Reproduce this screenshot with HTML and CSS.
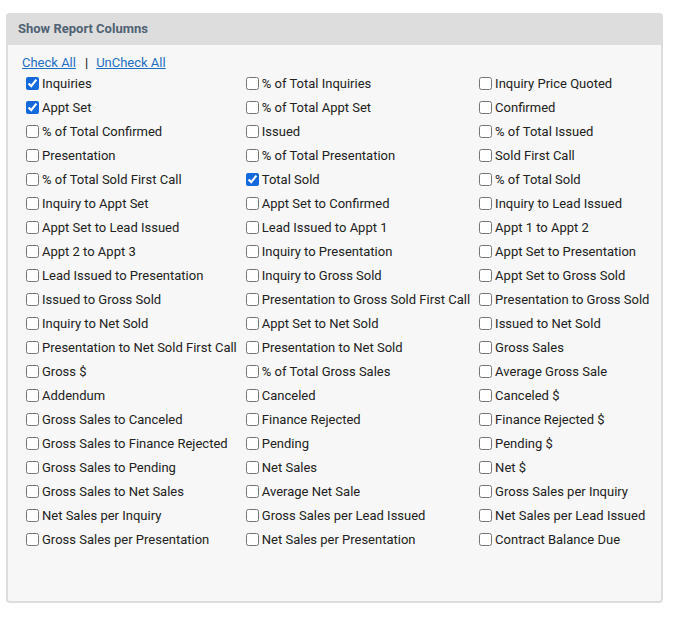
FILE: index.html
```html
<!DOCTYPE html>
<html>
<head>
<meta charset="utf-8">
<link rel="stylesheet" href="styles.css">
</head>
<body>
<div class="panel">
  <div class="panel-header">Show Report Columns</div>
  <div class="panel-body">
    <div class="links"><a href="#">Check All</a><span class="sep">|</span><a href="#">UnCheck All</a></div>
    <div class="grid">
      <label class="item"><input type="checkbox" checked><span>Inquiries</span></label>
      <label class="item"><input type="checkbox"><span>% of Total Inquiries</span></label>
      <label class="item"><input type="checkbox"><span>Inquiry Price Quoted</span></label>
      <label class="item"><input type="checkbox" checked><span>Appt Set</span></label>
      <label class="item"><input type="checkbox"><span>% of Total Appt Set</span></label>
      <label class="item"><input type="checkbox"><span>Confirmed</span></label>
      <label class="item"><input type="checkbox"><span>% of Total Confirmed</span></label>
      <label class="item"><input type="checkbox"><span>Issued</span></label>
      <label class="item"><input type="checkbox"><span>% of Total Issued</span></label>
      <label class="item"><input type="checkbox"><span>Presentation</span></label>
      <label class="item"><input type="checkbox"><span>% of Total Presentation</span></label>
      <label class="item"><input type="checkbox"><span>Sold First Call</span></label>
      <label class="item"><input type="checkbox"><span>% of Total Sold First Call</span></label>
      <label class="item"><input type="checkbox" checked><span>Total Sold</span></label>
      <label class="item"><input type="checkbox"><span>% of Total Sold</span></label>
      <label class="item"><input type="checkbox"><span>Inquiry to Appt Set</span></label>
      <label class="item"><input type="checkbox"><span>Appt Set to Confirmed</span></label>
      <label class="item"><input type="checkbox"><span>Inquiry to Lead Issued</span></label>
      <label class="item"><input type="checkbox"><span>Appt Set to Lead Issued</span></label>
      <label class="item"><input type="checkbox"><span>Lead Issued to Appt 1</span></label>
      <label class="item"><input type="checkbox"><span>Appt 1 to Appt 2</span></label>
      <label class="item"><input type="checkbox"><span>Appt 2 to Appt 3</span></label>
      <label class="item"><input type="checkbox"><span>Inquiry to Presentation</span></label>
      <label class="item"><input type="checkbox"><span>Appt Set to Presentation</span></label>
      <label class="item"><input type="checkbox"><span>Lead Issued to Presentation</span></label>
      <label class="item"><input type="checkbox"><span>Inquiry to Gross Sold</span></label>
      <label class="item"><input type="checkbox"><span>Appt Set to Gross Sold</span></label>
      <label class="item"><input type="checkbox"><span>Issued to Gross Sold</span></label>
      <label class="item"><input type="checkbox"><span>Presentation to Gross Sold First Call</span></label>
      <label class="item"><input type="checkbox"><span>Presentation to Gross Sold</span></label>
      <label class="item"><input type="checkbox"><span>Inquiry to Net Sold</span></label>
      <label class="item"><input type="checkbox"><span>Appt Set to Net Sold</span></label>
      <label class="item"><input type="checkbox"><span>Issued to Net Sold</span></label>
      <label class="item"><input type="checkbox"><span>Presentation to Net Sold First Call</span></label>
      <label class="item"><input type="checkbox"><span>Presentation to Net Sold</span></label>
      <label class="item"><input type="checkbox"><span>Gross Sales</span></label>
      <label class="item"><input type="checkbox"><span>Gross $</span></label>
      <label class="item"><input type="checkbox"><span>% of Total Gross Sales</span></label>
      <label class="item"><input type="checkbox"><span>Average Gross Sale</span></label>
      <label class="item"><input type="checkbox"><span>Addendum</span></label>
      <label class="item"><input type="checkbox"><span>Canceled</span></label>
      <label class="item"><input type="checkbox"><span>Canceled $</span></label>
      <label class="item"><input type="checkbox"><span>Gross Sales to Canceled</span></label>
      <label class="item"><input type="checkbox"><span>Finance Rejected</span></label>
      <label class="item"><input type="checkbox"><span>Finance Rejected $</span></label>
      <label class="item"><input type="checkbox"><span>Gross Sales to Finance Rejected</span></label>
      <label class="item"><input type="checkbox"><span>Pending</span></label>
      <label class="item"><input type="checkbox"><span>Pending $</span></label>
      <label class="item"><input type="checkbox"><span>Gross Sales to Pending</span></label>
      <label class="item"><input type="checkbox"><span>Net Sales</span></label>
      <label class="item"><input type="checkbox"><span>Net $</span></label>
      <label class="item"><input type="checkbox"><span>Gross Sales to Net Sales</span></label>
      <label class="item"><input type="checkbox"><span>Average Net Sale</span></label>
      <label class="item"><input type="checkbox"><span>Gross Sales per Inquiry</span></label>
      <label class="item"><input type="checkbox"><span>Net Sales per Inquiry</span></label>
      <label class="item"><input type="checkbox"><span>Gross Sales per Lead Issued</span></label>
      <label class="item"><input type="checkbox"><span>Net Sales per Lead Issued</span></label>
      <label class="item"><input type="checkbox"><span>Gross Sales per Presentation</span></label>
      <label class="item"><input type="checkbox"><span>Net Sales per Presentation</span></label>
      <label class="item"><input type="checkbox"><span>Contract Balance Due</span></label>
    </div>
  </div>
</div>
</body>
</html>
```

FILE: styles.css
```css
html, body {
  margin: 0;
  padding: 0;
  background: #ffffff;
}
body {
  padding: 13px 12px 0 6px;
  font-family: Roboto, "Liberation Sans", sans-serif;
  font-size: 13px;
  color: #222;
}
.panel {
  width: 657px;
  height: 590px;
  box-sizing: border-box;
  border: 2px solid #dddddd;
  border-radius: 4px;
  background: #f7f7f7;
  display: flex;
  flex-direction: column;
}
.panel-header {
  background: #dddddd;
  margin: -2px -2px 0 -2px;
  padding: 0 0 2px 12px;
  height: 30px;
  display: flex;
  align-items: center;
  font-weight: bold;
  font-size: 13px;
  color: #4f6273;
  border-radius: 4px 4px 0 0;
}
.panel-body {
  padding: 8px 0 0 14px;
}
.links {
  box-sizing: border-box;
  height: 18px;
  padding-top: 2px;
  line-height: 16px;
  display: flex;
  align-items: center;
}
.links a {
  color: #1f6fc5;
  text-decoration: underline;
}
.sep {
  color: #111;
  margin: 0 8px 0 9px;
}
.grid {
  display: grid;
  grid-template-columns: max-content max-content max-content;
  column-gap: 5px;
}
.item {
  height: 24px;
  display: flex;
  align-items: center;
  white-space: nowrap;
}
.item input {
  width: 13px;
  height: 13px;
  margin: 0 3px 0 4px;
  accent-color: #1469dc;
}
```
